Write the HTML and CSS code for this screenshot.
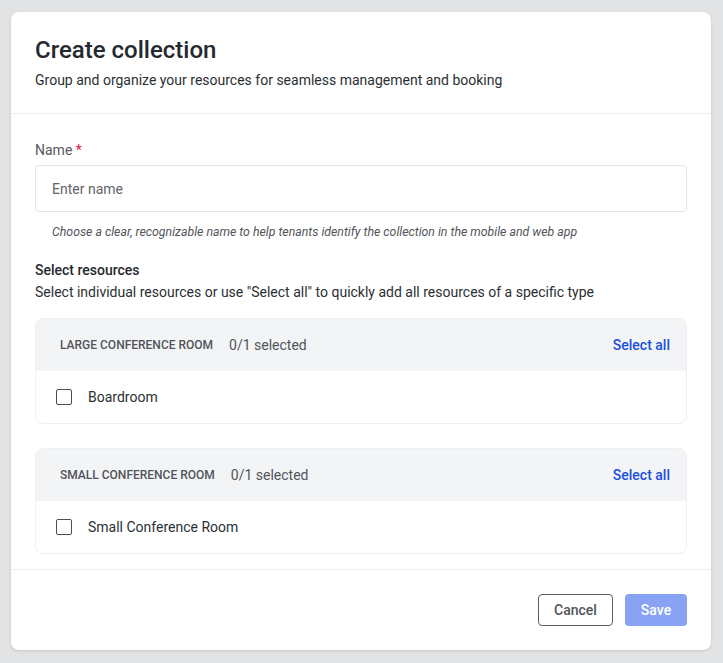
FILE: index.html
```html
<!DOCTYPE html>
<html lang="en">
<head>
    <meta charset="UTF-8">
    <meta name="viewport" content="width=device-width, initial-scale=1.0">
    <title>Create collection</title>
    <link rel="stylesheet" href="styles.css">
</head>
<body>
    <div class="modal">
        <header class="modal-header">
            <h1>Create collection</h1>
            <p>Group and organize your resources for seamless management and booking</p>
        </header>

        <div class="modal-body">
            <label class="field-label" for="name">Name <span class="required">*</span></label>
            <input class="text-input" id="name" type="text" placeholder="Enter name">
            <p class="hint">Choose a clear, recognizable name to help tenants identify the collection in the mobile and web app</p>

            <h2 class="section-title">Select resources</h2>
            <p class="section-text">Select individual resources or use "Select all" to quickly add all resources of a specific type</p>

            <div class="group">
                <div class="group-head">
                    <span class="group-name">Large conference room</span>
                    <span class="group-count">0/1 selected</span>
                    <a href="#" class="select-all">Select all</a>
                </div>
                <label class="group-row">
                    <input type="checkbox" class="check">
                    <span>Boardroom</span>
                </label>
            </div>

            <div class="group">
                <div class="group-head">
                    <span class="group-name">Small conference room</span>
                    <span class="group-count">0/1 selected</span>
                    <a href="#" class="select-all">Select all</a>
                </div>
                <label class="group-row">
                    <input type="checkbox" class="check">
                    <span>Small Conference Room</span>
                </label>
            </div>
        </div>

        <footer class="modal-footer">
            <button class="btn btn-outline">Cancel</button>
            <button class="btn btn-primary" disabled>Save</button>
        </footer>
    </div>
</body>
</html>
```

FILE: styles.css
```css
html, body {
    margin: 0;
    height: 100%;
}
body {
    background-color: #e2e3e5;
    font-family: Roboto, 'Liberation Sans', sans-serif;
    color: #2b2f33;
    padding: 12px 12px 0 11px;
    box-sizing: border-box;
}
.modal {
    width: 700px;
    height: 638px;
    background-color: #ffffff;
    border-radius: 8px;
    box-shadow: 0 1px 3px rgba(0, 0, 0, 0.12);
    display: flex;
    flex-direction: column;
}
.modal-header {
    padding: 23px 24px 23px;
    border-bottom: 1px solid #eeeff1;
}
.modal-header h1 {
    margin: 0;
    font-size: 24px;
    line-height: 30px;
    font-weight: 500;
    color: #24292e;
}
.modal-header p {
    margin: 5px 0 0;
    font-size: 14px;
    line-height: 20px;
    color: #2b2f33;
}
.modal-body {
    padding: 26px 24px 13px;
    flex: 1;
}
.field-label {
    display: block;
    font-size: 14px;
    line-height: 20px;
    color: #555a60;
}
.required {
    color: #d8194f;
}
.text-input {
    display: block;
    box-sizing: border-box;
    width: 100%;
    height: 47px;
    margin-top: 5px;
    padding: 0 16px;
    border: 1px solid #e3e5e8;
    border-radius: 4px;
    font-family: inherit;
    font-size: 14px;
    color: #2b2f33;
}
.text-input::placeholder {
    color: #5f646a;
}
.hint {
    margin: 12px 0 0 17px;
    font-size: 12.3px;
    line-height: 16px;
    font-style: italic;
    color: #50555b;
}
.section-title {
    margin: 20px 0 0;
    font-size: 14px;
    line-height: 20px;
    font-weight: 500;
    color: #24292e;
}
.section-text {
    margin: 2px 0 0;
    font-size: 14px;
    line-height: 20px;
    color: #2b2f33;
}
.group {
    margin-top: 16px;
    border: 1px solid #eeeff1;
    border-radius: 8px;
    overflow: hidden;
}
.group + .group {
    margin-top: 24px;
}
.group-head {
    display: flex;
    align-items: center;
    height: 52px;
    padding: 0 16px 0 24px;
    background-color: #f3f4f6;
}
.group-name {
    font-size: 12px;
    font-weight: 500;
    text-transform: uppercase;
    color: #50555b;
    margin-right: 16px;
}
.group-count {
    font-size: 14px;
    color: #50555b;
}
.select-all {
    margin-left: auto;
    font-size: 14px;
    font-weight: 500;
    color: #1a4fe0;
    text-decoration: none;
}
.group-row {
    display: flex;
    align-items: center;
    height: 52px;
    padding: 0 20px;
    font-size: 14px;
    color: #2b2f33;
}
.check {
    appearance: none;
    width: 16px;
    height: 16px;
    margin: 0 16px 0 0;
    border: 1.5px solid #4a4f55;
    border-radius: 2px;
    background: #ffffff;
}
.modal-footer {
    display: flex;
    justify-content: flex-end;
    gap: 12px;
    padding: 24px;
    border-top: 1px solid #eeeff1;
}
.btn {
    height: 32px;
    border-radius: 4px;
    font-family: inherit;
    font-size: 14px;
    font-weight: 500;
}
.btn-outline {
    width: 75px;
    background: #ffffff;
    border: 1px solid #5a5f65;
    color: #50555b;
}
.btn-primary {
    width: 62px;
    background-color: #88a3f4;
    border: none;
    color: #ffffff;
}
```
